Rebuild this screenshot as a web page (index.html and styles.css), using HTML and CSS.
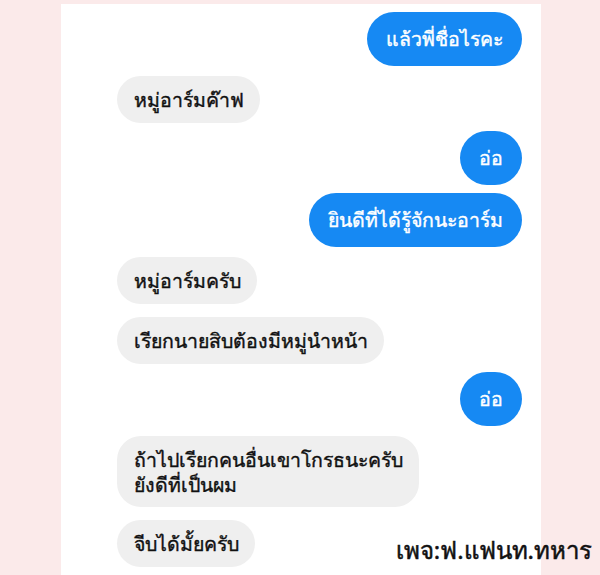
FILE: index.html
```html
<!DOCTYPE html>
<html lang="th">
<head>
    <meta charset="UTF-8">
    <meta name="viewport" content="width=device-width, initial-scale=1.0">
    <title>แชท</title>
    <link rel="stylesheet" href="styles.css">
</head>
<body>
    <div class="page">
        <div class="chat">
            <div class="msg me">แล้วพี่ชื่อไรคะ</div>
            <div class="msg them">หมู่อาร์มค๊าฟ</div>
            <div class="msg me">อ่อ</div>
            <div class="msg me">ยินดีที่ได้รู้จักนะอาร์ม</div>
            <div class="msg them">หมู่อาร์มครับ</div>
            <div class="msg them">เรียกนายสิบต้องมีหมู่นำหน้า</div>
            <div class="msg me">อ่อ</div>
            <div class="msg them two-line">ถ้าไปเรียกคนอื่นเขาโกรธนะครับ<br>ยังดีที่เป็นผม</div>
            <div class="msg them">จีบได้มั้ยครับ</div>
        </div>
        <div class="credit">เพจ:ฟ.แฟนท.ทหาร</div>
    </div>
</body>
</html>
```

FILE: styles.css
```css
html, body {
    margin: 0;
    height: 100%;
}
body {
    background: #fbeaea;
    font-family: 'Noto Sans', sans-serif;
    overflow: hidden;
}
.page {
    position: relative;
    width: 600px;
    height: 575px;
    padding-top: 4px;
    box-sizing: border-box;
}
.chat {
    background: #fff;
    width: 480px;
    height: 571px;
    margin-left: 61px;
    padding: 8px 19px 0 56px;
    box-sizing: border-box;
    display: flex;
    flex-direction: column;
    gap: 8px;
}
.msg {
    font-size: 19.5px;
    line-height: 24px;
    -webkit-text-stroke: 0.4px currentColor;
    border-radius: 24px;
    white-space: nowrap;
}
.me {
    align-self: flex-end;
    background: #1689f3;
    color: #fff;
    padding: 15px 19px;
    border-radius: 27px;
}
.them {
    align-self: flex-start;
    background: #efefef;
    color: #111;
    padding: 12px 16px 11px 17px;
    margin-top: 2px;
}
.them + .them {
    margin-top: 5px;
}
.two-line {
    line-height: 25px;
    padding-top: 11px;
    padding-bottom: 10px;
}
.credit {
    position: absolute;
    right: 8px;
    bottom: 5px;
    font-size: 24px;
    -webkit-text-stroke: 0.5px currentColor;
    color: #111;
}
```
